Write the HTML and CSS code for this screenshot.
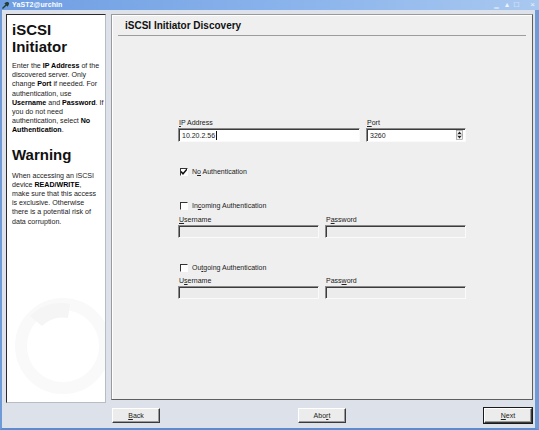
FILE: index.html
```html
<!DOCTYPE html>
<html>
<head>
<meta charset="utf-8">
<link rel="stylesheet" href="styles.css">
</head>
<body>
<div class="window">
  <div class="titlebar">
    <svg class="appicon" width="7" height="7" viewBox="0 0 7 7"><path d="M0.5 6.5 L4 3 M3.5 1.5 L5.5 0.5 L6.5 1.5 L5.5 3.5 Z" stroke="#1f3d2a" stroke-width="1.4" fill="#2f5e3c"/></svg>
    <span class="title">YaST2@urchin</span>
    <span class="tbtns"><span class="tb">&#8215;</span><span class="tb">&#9652;</span><span class="tb">&#9633;</span><span class="tb tbx">&#215;</span></span>
  </div>
  <div class="frame">
    <aside class="sidebar">
      <h1 class="sb-h">iSCSI<br>Initiator</h1>
      <p class="sb-p">Enter the <b>IP Address</b> of the<br>discovered server. Only<br>change <b>Port</b> if needed. For<br>authentication, use<br><b>Username</b> and <b>Password</b>. If<br>you do not need<br>authentication, select <b>No</b><br><b>Authentication</b>.</p>
      <h1 class="sb-h sb-h2">Warning</h1>
      <p class="sb-p sb-p2">When accessing an iSCSI<br>device <b>READ/WRITE</b>,<br>make sure that this access<br>is exclusive. Otherwise<br>there is a potential risk of<br>data corruption.</p>
      <svg class="mark" width="98" height="130" viewBox="0 0 98 130">
        <circle cx="55" cy="74" r="42" fill="none" stroke="#f9f9f9" stroke-width="12"/>
        <path d="M22 44 A42 42 0 0 1 62 32 L60 46 A28 28 0 0 0 34 54 Z" fill="#f5f5f5"/>
      </svg>
    </aside>
    <main class="main">
      <section class="content">
        <div class="header"><h2 class="heading">iSCSI Initiator Discovery</h2></div>
        <div class="form">
          <div class="row2">
            <div class="field">
              <label class="lbl"><u>I</u>P Address</label>
              <div class="input white"><span>10.20.2.56</span><span class="caret"></span></div>
            </div>
            <div class="field">
              <label class="lbl"><u>P</u>ort</label>
              <div class="input white spin"><span>3260</span>
                <svg class="spinarrows" width="7" height="10" viewBox="0 0 7 10"><rect x="0.5" y="0.5" width="6" height="9" fill="#f4f4f4" stroke="#888" stroke-width="0.6"/><path d="M1.5 4 L3.5 1.5 L5.5 4 Z M1.5 6 L3.5 8.5 L5.5 6 Z" fill="#222"/><line x1="0.5" y1="5" x2="6.5" y2="5" stroke="#777" stroke-width="0.6"/></svg>
              </div>
            </div>
          </div>
          <div class="check first"><span class="box"><svg width="8" height="8" viewBox="0 0 8 8"><path d="M1 3.5 L3 5.8 L7 1.2" fill="none" stroke="#111" stroke-width="1.5"/></svg></span><span class="ctext">N<u>o</u> Authentication</span></div>
          <div class="check second"><span class="box"></span><span class="ctext">In<u>c</u>oming Authentication</span></div>
          <div class="row2 sub">
            <div class="field">
              <label class="lbl"><u>U</u>sername</label>
              <div class="input grey small"></div>
            </div>
            <div class="field">
              <label class="lbl">P<u>a</u>ssword</label>
              <div class="input grey small"></div>
            </div>
          </div>
          <div class="check third"><span class="box"></span><span class="ctext">Ou<u>t</u>going Authentication</span></div>
          <div class="row2 sub">
            <div class="field">
              <label class="lbl">U<u>s</u>ername</label>
              <div class="input grey small"></div>
            </div>
            <div class="field">
              <label class="lbl">Pass<u>w</u>ord</label>
              <div class="input grey small"></div>
            </div>
          </div>
        </div>
      </section>
      <div class="buttons">
        <button class="btn"><u>B</u>ack</button>
        <button class="btn">Abo<u>r</u>t</button>
        <button class="btn default"><u>N</u>ext</button>
      </div>
    </main>
  </div>
</div>
</body>
</html>
```
FILE: styles.css
```css
html, body {
  margin: 0;
  padding: 0;
}
body {
  width: 539px;
  height: 430px;
  overflow: hidden;
  font-family: "Liberation Sans", Arial, sans-serif;
  color: #111;
}
.window {
  width: 539px;
  height: 430px;
  box-sizing: border-box;
  display: flex;
  flex-direction: column;
  background: #dde2ea;
  border-left: 2px solid #6f9ad8;
  border-right: 4px solid #6f9ad8;
  border-bottom: 2px solid #5d8bd0;
}
.titlebar {
  height: 10px;
  flex: none;
  margin: 0 -4px 0 -2px;
  background: linear-gradient(to right, #6e9de2, #8db6ec 60%, #a9c8f0);
  display: flex;
  align-items: center;
  padding-left: 2px;
  color: #fff;
}
.appicon { flex: none; margin-right: 3px; }
.title {
  font-size: 7px;
  font-weight: bold;
  letter-spacing: 0.1px;
  line-height: 10px;
}
.tbtns {
  margin-left: auto;
  display: flex;
  align-items: center;
  gap: 3px;
  padding-right: 3px;
  color: #eef4fc;
  font-size: 8px;
  line-height: 10px;
}
.tb { width: 7px; text-align: center; }
.tbx { margin-left: 6px; }
.frame {
  flex: 1;
  display: flex;
  gap: 5px;
  padding: 4px 2px 0 4px;
  min-height: 0;
}
.sidebar {
  width: 100px;
  height: 389px;
  box-sizing: border-box;
  flex: none;
  background: #fff;
  border: 1px solid;
  border-color: #2a2a2a #b8bcc4 #b8bcc4 #2a2a2a;
  padding: 0 1px 0 5px;
  display: flex;
  flex-direction: column;
  overflow: hidden;
}
.sb-h {
  margin: 6px 0 0;
  font-size: 15px;
  line-height: 17px;
  font-weight: bold;
  color: #111;
}
.sb-h2 { margin-top: 10px; }
.sb-p {
  margin: 7px 0 0;
  font-size: 7.1px;
  line-height: 9.2px;
  color: #222;
  white-space: nowrap;
}
.sb-p2 { margin-top: 9px; }
.sb-p b { color: #000; }
.mark { margin-top: auto; margin-left: -4px; flex: none; }
.main {
  flex: 1;
  display: flex;
  flex-direction: column;
  min-width: 0;
}
.content {
  flex: 1;
  background: #efefef;
  border: 1px solid;
  border-color: #9a9a9a #5e5e5e #5e5e5e #9a9a9a;
  box-shadow: inset 1px 1px 0 #fff;
  display: flex;
  flex-direction: column;
}
.header {
  margin: 0 6px;
  height: 20px;
  border-bottom: 1px solid #9c9c9c;
  padding-left: 7px;
}
.heading {
  margin: 5px 0 0;
  font-size: 10px;
  line-height: 12px;
  font-weight: bold;
  color: #111;
}
.form {
  width: 288px;
  margin: 82px auto 0;
  font-size: 7px;
  color: #222;
}
.row2 {
  display: grid;
  grid-template-columns: 182px 100px;
  column-gap: 6px;
}
.row2.sub { grid-template-columns: 141px 141px; }
.field { display: flex; flex-direction: column; }
.lbl {
  display: block;
  height: 9px;
  line-height: 9px;
  padding-left: 1px;
  margin-bottom: 1px;
}
.input {
  height: 14px;
  box-sizing: border-box;
  border: 1px solid;
  border-color: #8a8a8a #fafafa #fafafa #8a8a8a;
  box-shadow: inset 1px 1px 0 #3c3c3c;
  padding: 0 3px;
  line-height: 13px;
  font-size: 7px;
  display: flex;
  align-items: center;
}
.input.white { background: #fff; }
.input.grey { background: #ececec; }
.input.small { height: 13px; }
.caret {
  display: inline-block;
  width: 1px;
  height: 9px;
  background: #111;
  margin-left: 1px;
}
.spin { justify-content: space-between; padding-right: 2px; }
.spinarrows { flex: none; }
.check {
  height: 10px;
  display: flex;
  align-items: center;
  padding-left: 2px;
  line-height: 10px;
}
.ctext { white-space: nowrap; }
.check.first { margin-top: 25px; }
.check.second { margin-top: 24px; margin-bottom: 4px; }
.check.third { margin-top: 25px; margin-bottom: 3px; }
.box {
  width: 8px;
  height: 8px;
  box-sizing: border-box;
  border: 1px solid;
  border-color: #333 #fff #fff #333;
  background: #fff;
  margin-right: 4px;
  display: flex;
  align-items: center;
  justify-content: center;
  overflow: hidden;
}
.box svg { flex: none; }
.buttons {
  height: 28px;
  flex: none;
  display: flex;
  justify-content: space-between;
  align-items: flex-start;
  padding: 8px 1px 0;
  box-sizing: border-box;
}
.btn {
  width: 48px;
  height: 15px;
  box-sizing: border-box;
  margin: 0;
  padding: 0;
  background: #ececec;
  border: 1px solid;
  border-color: #fff #3a3a3a #3a3a3a #fff;
  box-shadow: inset -1px -1px 0 #9a9a9a;
  font-family: "Liberation Sans", Arial, sans-serif;
  font-size: 7px;
  color: #222;
  line-height: 13px;
}
.btn.default {
  outline: 1px solid #1a1a1a;
}
```
